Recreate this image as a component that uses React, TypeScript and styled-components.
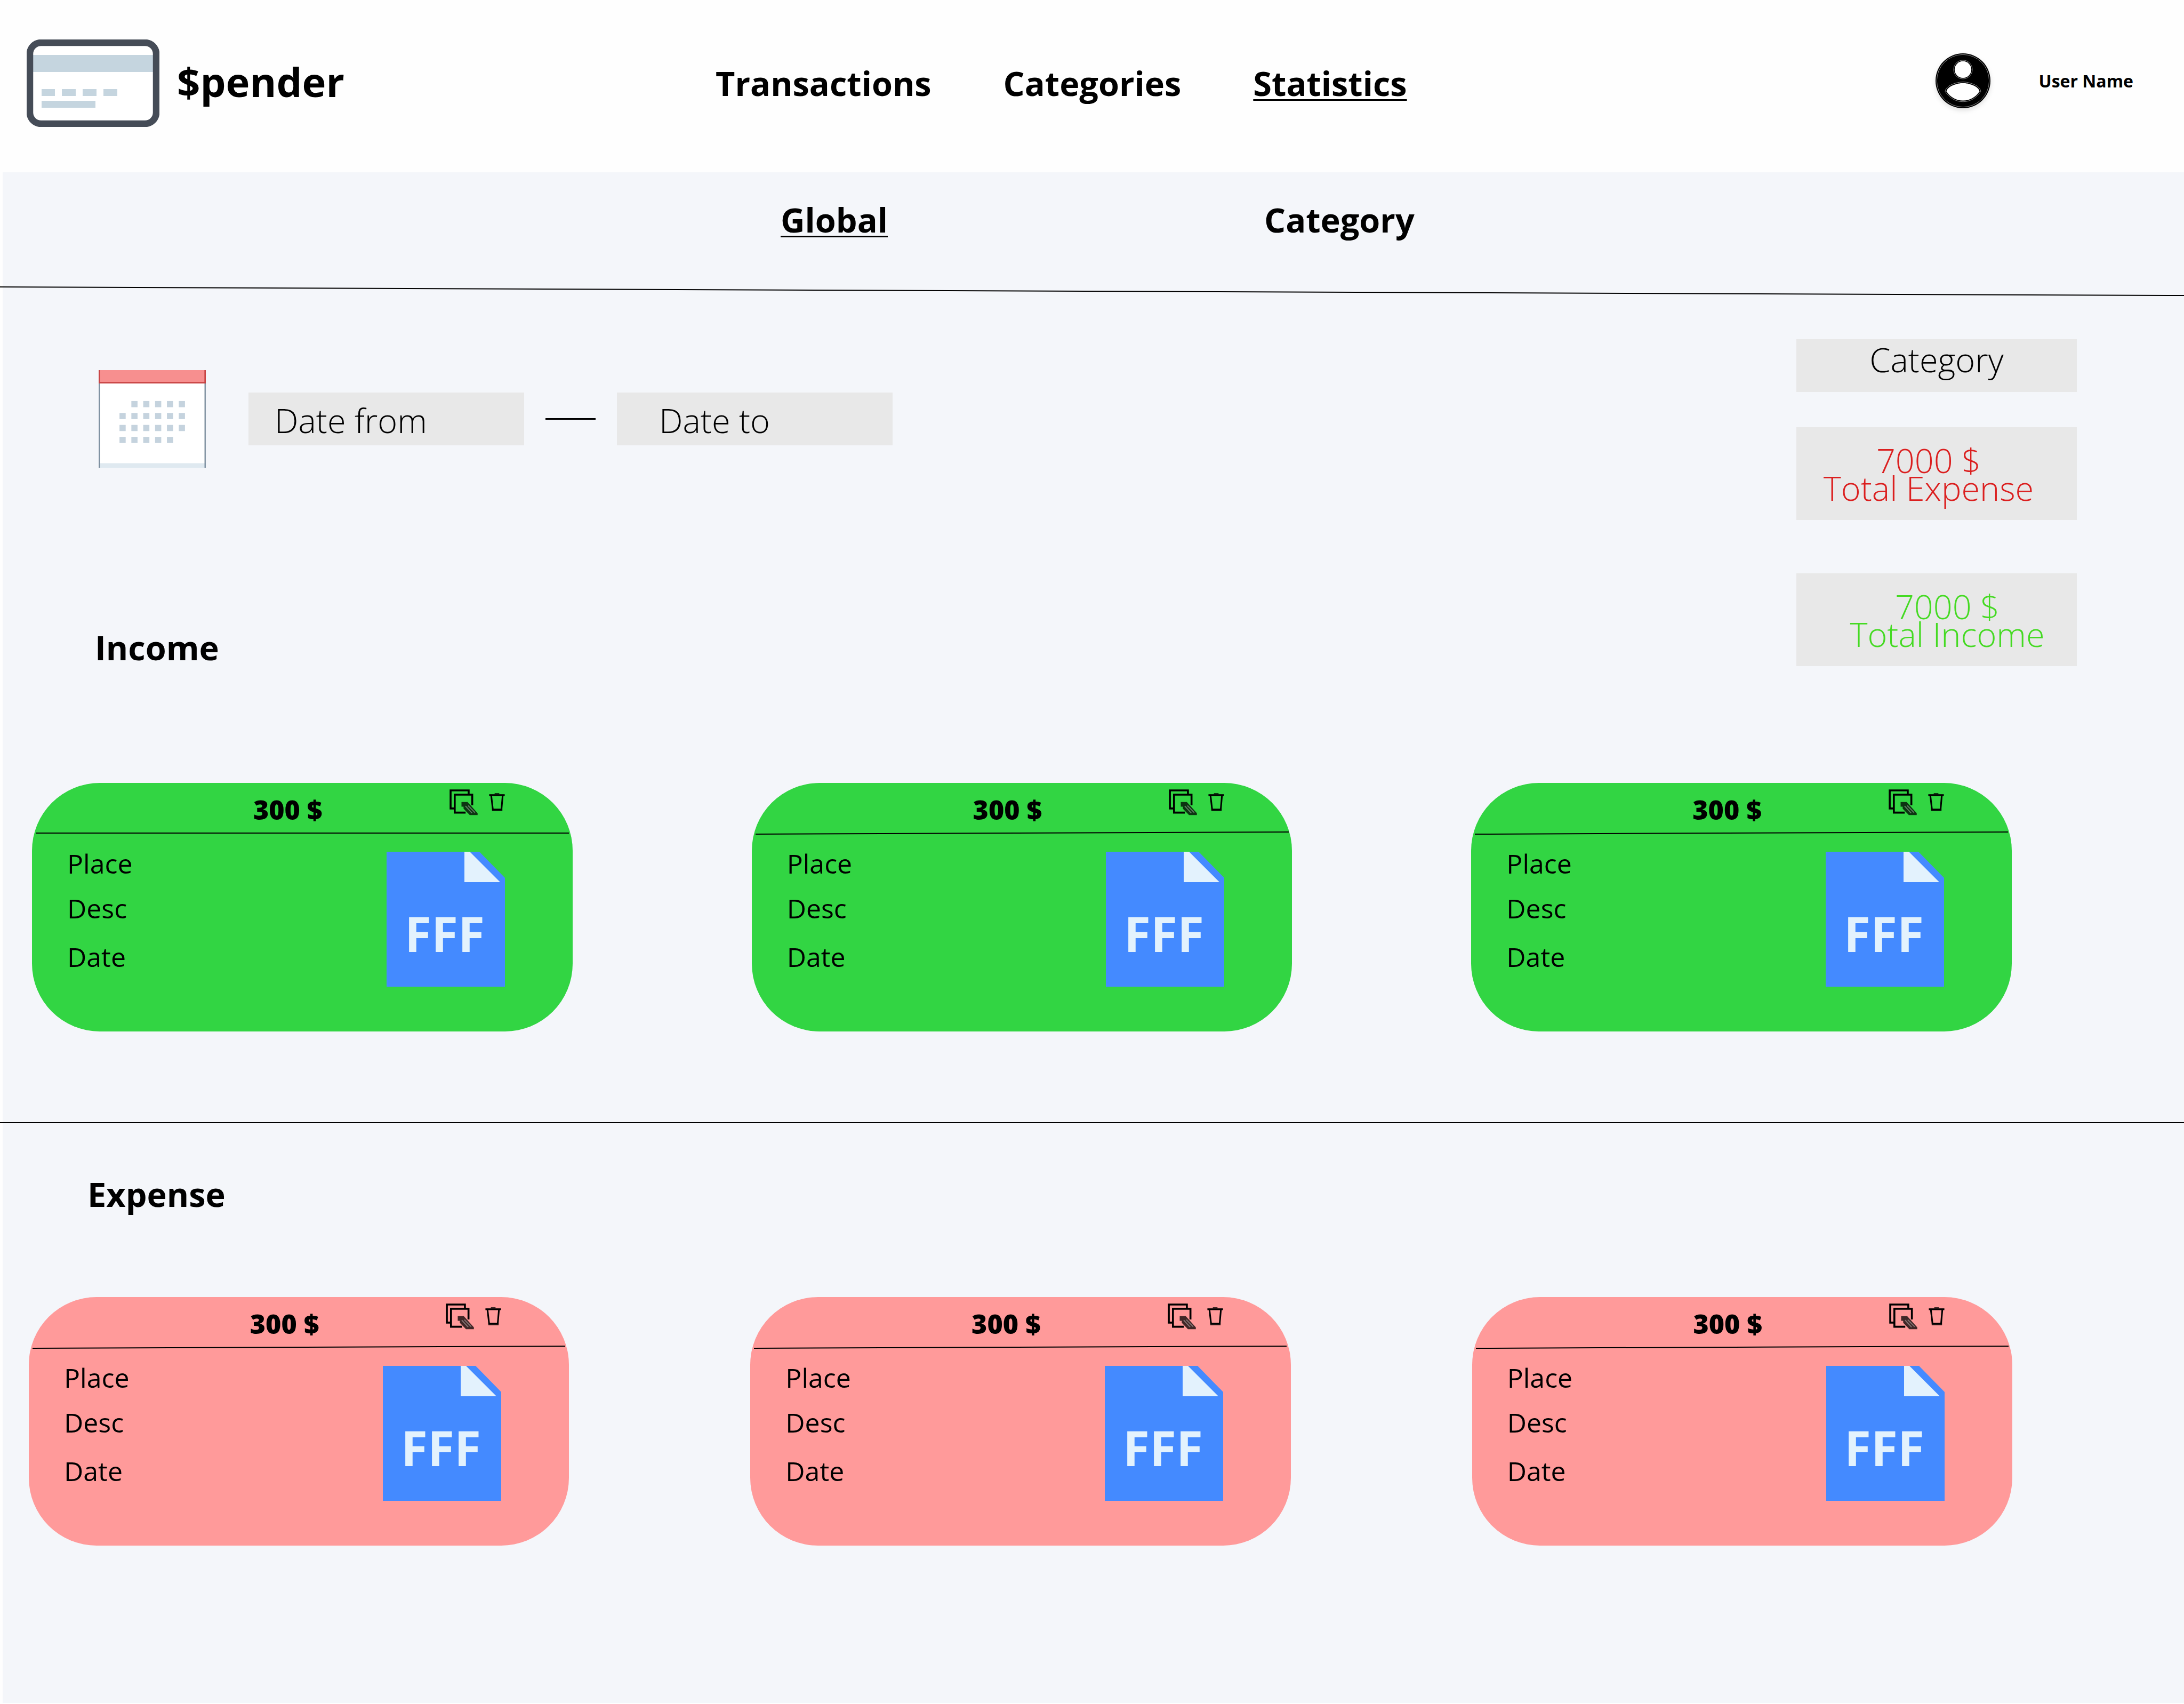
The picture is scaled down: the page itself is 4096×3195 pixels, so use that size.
import React from "react";
import styled, { createGlobalStyle } from "styled-components";

const color = {
  white: "#fefefe",
  page: "#f4f6fa",
  field: "#e8e8e8",
  ink: "#000",
  income: "#32d543",
  expense: "#ff9a9a",
  incomeText: "#44da22",
  expenseText: "#db1f1f",
};

const size = {
  brand: "76px",
  title: "63px",
  card: "50px",
  small: "32px",
};

const GlobalStyle = createGlobalStyle`
  *, *::before, *::after { box-sizing: border-box; }
  body {
    margin: 0;
    background: ${color.white};
    color: ${color.ink};
    font-family: "Open Sans", "Noto Sans", sans-serif;
  }
  button, input { font-family: inherit; }
  a { color: inherit; text-decoration: none; }
`;

const Page = styled.div`
  display: flex;
  flex-direction: column;
  min-height: 100vh;
  padding-bottom: 2px;
`;

const Header = styled.header`
  display: grid;
  grid-template-columns: 1342px auto 1fr;
  align-items: center;
  height: 323px;
  padding-bottom: 11px;
`;

const Brand = styled.a`
  display: flex;
  align-items: center;
  gap: 33px;
  padding-left: 50px;
`;

const BrandName = styled.span`
  padding-bottom: 8px;
  font-size: ${size.brand};
  font-weight: 700;
`;

const Nav = styled.nav`
  display: flex;
  gap: 135px;
`;

const NavLink = styled.a<{ $active?: boolean }>`
  font-size: ${size.title};
  font-weight: 700;
  line-height: 88px;
  text-decoration: ${(p) => (p.$active ? "underline" : "none")};
  text-decoration-thickness: 3px;
  text-decoration-skip-ink: none;
  text-underline-offset: 6px;
`;

const User = styled.a`
  display: flex;
  align-items: center;
  justify-self: end;
  gap: 90px;
  padding: 0 95px 10px 0;
  font-size: ${size.small};
  font-weight: 700;
`;

const Avatar = styled.svg`
  display: block;
  filter: drop-shadow(0 4px 4px rgba(0, 0, 0, 0.12));
`;

const Main = styled.main`
  flex: 1;
  border-left: 5px solid ${color.white};
  background: ${color.page};
`;

const Tabs = styled.nav`
  display: flex;
  gap: 706px;
  height: 222px;
  padding: 45px 0 0 1459px;
`;

const Rule = styled.hr<{ $slant?: string }>`
  height: 2px;
  margin: 0 0 0 -5px;
  border: 0;
  background: ${color.ink};
  transform: ${(p) => (p.$slant ? `skewY(${p.$slant})` : "none")};
`;

const Overview = styled.section`
  display: flex;
  justify-content: space-between;
  align-items: flex-start;
  padding: 89px 201px 0 180px;
`;

const DateRange = styled.form`
  display: flex;
  align-items: center;
  margin-top: 58px;
`;

const DateField = styled.input<{ $indent: number }>`
  width: 517px;
  height: 99px;
  padding: 4px 0 0 ${(p) => p.$indent}px;
  border: 0;
  border-radius: 0;
  background: ${color.field};
  font-size: ${size.title};
  font-weight: 300;
  &::placeholder {
    color: ${color.ink};
    opacity: 1;
  }
`;

const CalendarButton = styled.button`
  margin-right: 80px;
  padding: 0;
  border: 0;
  background: none;
  svg { display: block; }
`;

const Dash = styled.span`
  width: 94px;
  height: 3px;
  margin: 0 40px;
  background: ${color.ink};
`;

const Summary = styled.aside`
  display: flex;
  flex-direction: column;
  width: 526px;
`;

const CategoryButton = styled.button`
  display: flex;
  justify-content: center;
  align-items: flex-start;
  height: 99px;
  padding: 0;
  margin-bottom: 66px;
  border: 0;
  background: ${color.field};
  color: ${color.ink};
  font-size: ${size.title};
  font-weight: 300;
  line-height: 76px;
`;

const Total = styled.p<{ $tone: string; $inset: string }>`
  height: 174px;
  margin: 0 0 100px;
  padding: ${(p) => p.$inset};
  background: ${color.field};
  color: ${(p) => p.$tone};
  font-size: ${size.title};
  font-weight: 300;
  line-height: 52px;
  text-align: center;
  white-space: nowrap;
  &:last-child { margin-bottom: 0; }
`;

const Heading = styled.h2`
  margin: 0;
  font-size: ${size.title};
  font-weight: 700;
  line-height: 88px;
`;

const IncomeHeading = styled(Heading)`
  margin-top: 293px;
  margin-left: -7px;
`;

const ExpenseHeading = styled(Heading)`
  padding: 89px 0 0 159px;
`;

const Cards = styled.section<{ $gap: number; $space: string }>`
  display: grid;
  grid-template-columns: repeat(3, 1fr);
  gap: ${(p) => p.$gap}px;
  padding: ${(p) => p.$space};
`;

const Card = styled.article<{ $tone: string }>`
  height: 466px;
  border-radius: 127px;
  background: ${(p) => p.$tone};
`;

const CardHeader = styled.header`
  display: grid;
  grid-template-columns: 1fr auto 1fr;
  height: 93px;
  padding-right: 54px;
`;

const Amount = styled.strong`
  grid-column: 2;
  padding-top: 15px;
  font-size: ${size.card};
  font-weight: 800;
  line-height: 71px;
`;

const Actions = styled.div`
  display: flex;
  justify-self: end;
  align-items: flex-start;
  gap: 21px;
  padding: 11px 73px 0 0;
`;

const IconButton = styled.button`
  display: flex;
  align-items: center;
  height: 50px;
  padding: 0;
  border: 0;
  background: none;
  color: ${color.ink};
`;

const CardRule = styled.hr<{ $slanted: boolean }>`
  height: 2px;
  margin: 0 7px;
  border: 0;
  background: ${color.ink};
  transform: ${(p) => (p.$slanted ? "skewY(-0.23deg)" : "none")};
`;

const CardBody = styled.div`
  display: flex;
  justify-content: space-between;
  align-items: flex-start;
  padding: 21px 127px 0 66px;
`;

const Details = styled.ul`
  display: grid;
  grid-template-rows: 84px 91px auto;
  margin: 0;
  padding: 0;
  list-style: none;
  font-size: ${size.card};
  line-height: 71px;
`;

const FileLink = styled.a`
  margin-top: 13px;
  svg { display: block; }
`;

const LogoIcon = () => (
  <svg width="249" height="164" viewBox="0 0 249 164" aria-hidden="true">
    <rect x="6" y="6" width="237" height="152" rx="21" fill="#fff" />
    <path d="M12 29H237V61H12Z" fill="#c5d5df" />
    <path d="M28 93h25v13H28zM66 93h26v13H66zM105 93h26v13h-26zM144 93h26v13h-26zM28 115h101v13H28z" fill="#c5d5df" />
    <rect x="6" y="6" width="237" height="152" rx="21" fill="none" stroke="#454c57" strokeWidth="12.5" />
  </svg>
);

const AvatarIcon = () => (
  <Avatar width="103" height="103" viewBox="0 0 132 132" aria-hidden="true">
    <circle cx="66" cy="66" r="66" fill="#000" />
    <circle cx="66" cy="66" r="63" fill="none" stroke="#fff" strokeWidth="0.7" />
    <circle cx="66" cy="39" r="22.5" fill="#000" stroke="#fff" strokeWidth="0.7" />
    <circle cx="66" cy="39" r="20" fill="#fff" />
    <path
      d="M23.3 92C23.5 77 52 68.7 66 68.7S108.3 77 108.5 92C99 107 83 116.3 66 116.3S33 107 23.3 92Z"
      fill="#000"
      stroke="#fff"
      strokeWidth="0.7"
    />
    <path d="M26.5 91.5C27.5 79.5 53 71.5 66 71.5S104.5 79.5 105.5 91.5C97 105 82 113.5 66 113.5S35 105 26.5 91.5Z" fill="#fff" />
  </Avatar>
);

const calendarRows = [
  { y: 75, from: 1, to: 5 },
  { y: 104, from: 0, to: 5 },
  { y: 133, from: 0, to: 5 },
  { y: 162, from: 0, to: 4 },
];

const CalendarIcon = () => (
  <svg width="201" height="183" viewBox="0 0 260 237" aria-hidden="true">
    <path d="M0 0H260V237H0Z" fill="#fff" />
    <path d="M0 226H260V237H0Z" fill="#dfe9f0" />
    <path d="M1.5 32V237M258.5 32V237" stroke="#788b9c" strokeWidth="3" />
    <path d="M0 0H260V32H0Z" fill="#f78f8f" />
    <path d="M1.5 0V30.5H258.5V0" fill="none" stroke="#c74343" strokeWidth="3.5" />
    {calendarRows.map((row) =>
      [0, 1, 2, 3, 4, 5]
        .filter((column) => column >= row.from && column <= row.to)
        .map((column) => (
          <rect key={`${row.y}-${column}`} x={50.5 + column * 28.8} y={row.y} width="15" height="15" fill="#c5d3de" />
        ))
    )}
  </svg>
);

const EditIcon = () => (
  <svg width="53" height="49" viewBox="105 75 205 188" aria-hidden="true">
    <g fill="none" stroke="currentColor" strokeWidth="14">
      <path d="M143 213H113V82H244V108" />
      <path d="M222 243H143V113H270V190" />
    </g>
    <path d="M192 166H236L309 247V261H252L207 214V200H192Z" fill="currentColor" fillOpacity="0.75" />
    <path d="M221 195L268 246M240 192L290 243" stroke="#fff" strokeOpacity="0.35" strokeWidth="8" />
  </svg>
);

const TrashIcon = () => (
  <svg width="30" height="34" viewBox="393 117 114 133" aria-hidden="true">
    <path d="M433 121H467" stroke="currentColor" strokeOpacity="0.75" strokeWidth="10" />
    <path d="M393 132H507" stroke="currentColor" strokeWidth="13" />
    <path d="M408 136L420 238H483L492 136" fill="none" stroke="currentColor" strokeWidth="12" />
    <path d="M414 241H490" stroke="currentColor" strokeOpacity="0.75" strokeWidth="18" />
  </svg>
);

const FileIcon = () => (
  <svg width="222" height="253" viewBox="0 0 222 253" aria-hidden="true">
    <path d="M0 0H174L222 49V253H0Z" fill="#448aff" />
    <path d="M146 0H156L213 57H146Z" fill="#e3f2fd" />
    <text
      x="109"
      y="188"
      textAnchor="middle"
      fill="#e3f2fd"
      fontFamily='"Open Sans", sans-serif'
      fontWeight="700"
      fontSize="91"
    >
      FFF
    </text>
  </svg>
);

type EntryProps = { tone: string; slanted: boolean };

const EntryCard = ({ tone, slanted }: EntryProps) => (
  <Card $tone={tone}>
    <CardHeader>
      <Amount>300 $</Amount>
      <Actions>
        <IconButton type="button" aria-label="Edit">
          <EditIcon />
        </IconButton>
        <IconButton type="button" aria-label="Delete">
          <TrashIcon />
        </IconButton>
      </Actions>
    </CardHeader>
    <CardRule $slanted={slanted} />
    <CardBody>
      <Details>
        <li>Place</li>
        <li>Desc</li>
        <li>Date</li>
      </Details>
      <FileLink href="#file" aria-label="Attached file">
        <FileIcon />
      </FileLink>
    </CardBody>
  </Card>
);

const incomeEntries = [
  { id: 1, slanted: false },
  { id: 2, slanted: true },
  { id: 3, slanted: true },
];

const expenseEntries = [
  { id: 1, slanted: true },
  { id: 2, slanted: true },
  { id: 3, slanted: true },
];

export default function App() {
  return (
    <Page>
      <GlobalStyle />
      <Header>
        <Brand href="#home">
          <LogoIcon />
          <BrandName>$pender</BrandName>
        </Brand>
        <Nav aria-label="Main">
          <NavLink href="#transactions">Transactions</NavLink>
          <NavLink href="#categories">Categories</NavLink>
          <NavLink href="#statistics" $active aria-current="page">
            Statistics
          </NavLink>
        </Nav>
        <User href="#account">
          <AvatarIcon />
          User Name
        </User>
      </Header>

      <Main>
        <Tabs aria-label="Statistics">
          <NavLink href="#global" $active aria-current="page">
            Global
          </NavLink>
          <NavLink href="#category">Category</NavLink>
        </Tabs>
        <Rule $slant="0.224deg" />

        <Overview>
          <div>
            <DateRange>
              <CalendarButton type="button" aria-label="Open calendar">
                <CalendarIcon />
              </CalendarButton>
              <DateField $indent={49} type="text" aria-label="Date from" placeholder="Date from" />
              <Dash />
              <DateField $indent={79} type="text" aria-label="Date to" placeholder="Date to" />
            </DateRange>
            <IncomeHeading>Income</IncomeHeading>
          </div>
          <Summary>
            <CategoryButton type="button">Category</CategoryButton>
            <Total $tone={color.expenseText} $inset="36px 30px 0 0">
              7000 $<br />
              Total Expense
            </Total>
            <Total $tone={color.incomeText} $inset="36px 0 0 40px">
              7000 $<br />
              Total Income
            </Total>
          </Summary>
        </Overview>

        <Cards $gap={336} $space="210px 323px 170px 55px" aria-label="Income">
          {incomeEntries.map((entry) => (
            <EntryCard key={entry.id} tone={color.income} slanted={entry.slanted} />
          ))}
        </Cards>
        <Rule />

        <ExpenseHeading>Expense</ExpenseHeading>
        <Cards $gap={340} $space="149px 322px 0 49px" aria-label="Expense">
          {expenseEntries.map((entry) => (
            <EntryCard key={entry.id} tone={color.expense} slanted={entry.slanted} />
          ))}
        </Cards>
      </Main>
    </Page>
  );
}
